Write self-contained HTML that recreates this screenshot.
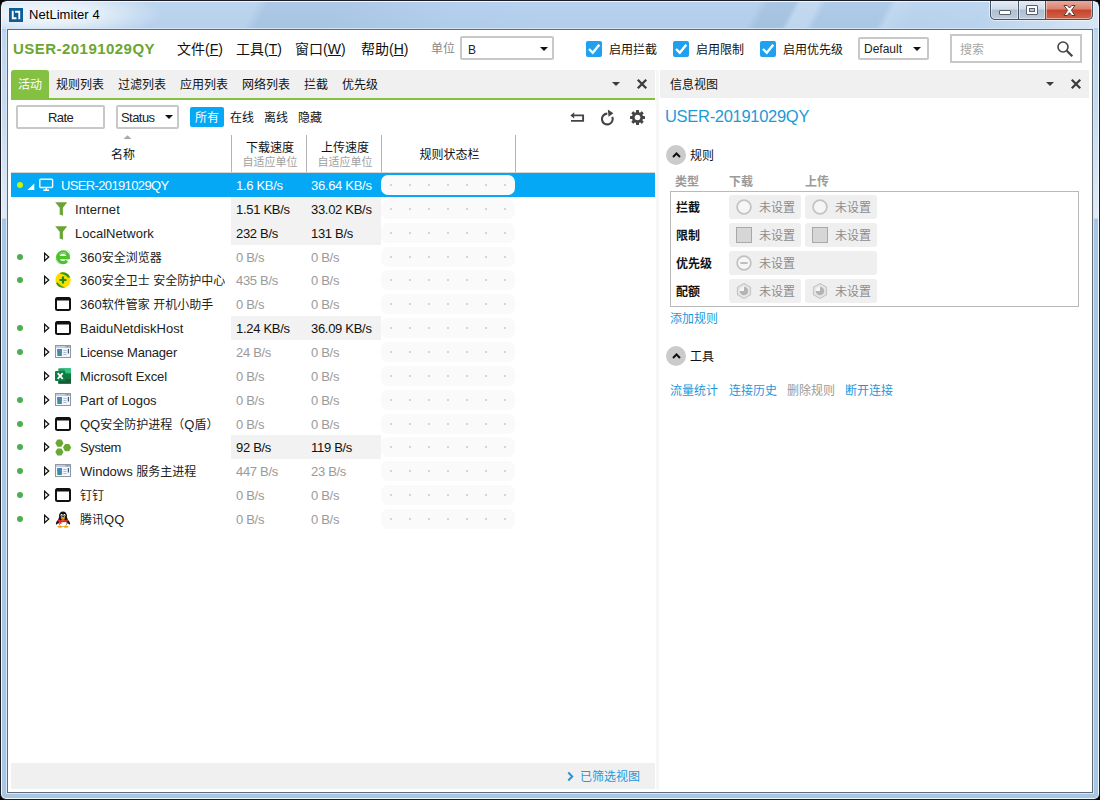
<!DOCTYPE html>
<html lang="zh-CN">
<head>
<meta charset="utf-8">
<title>NetLimiter 4</title>
<style>
*{box-sizing:border-box;margin:0;padding:0}
html,body{width:1100px;height:800px;overflow:hidden;background:#000}
body{font-family:"Liberation Sans","Noto Sans CJK SC",sans-serif;font-size:12px;color:#222;position:relative}
.abs{position:absolute}
#win{position:absolute;left:0;top:0;width:1100px;height:800px;border-radius:7px 7px 6px 6px;background:#1a1c26;overflow:hidden}
#frame{position:absolute;left:1px;top:1px;right:1px;bottom:1px;border-radius:6px 6px 5px 5px;background:#eef8ff}
#glass{position:absolute;left:1px;top:1px;right:1px;bottom:1px;border-radius:5px 5px 4px 4px;background:linear-gradient(180deg,#b5d1ed 0,#afcce9 26px,#bdd5ee 30px,#c6dbf1 110px,#e2ebf5 216px,#a8c5e3 217px,#a8c5e3 100%)}
#streak{position:absolute;left:2px;top:2px;width:1096px;height:26px;overflow:hidden}
#streak i{position:absolute;left:-20px;top:0;width:1140px;height:26px;transform:skewX(-28deg);background:linear-gradient(90deg,rgba(255,255,255,.1) 0,rgba(255,255,255,.1) 268px,rgba(20,50,90,.05) 280px,rgba(20,50,90,.05) 350px,rgba(20,50,90,0) 470px,rgba(255,255,255,.03) 560px,rgba(255,255,255,.03) 770px,rgba(20,50,90,.07) 780px,rgba(20,50,90,.07) 806px,rgba(255,255,255,.18) 812px,rgba(255,255,255,.18) 830px,rgba(20,50,90,.04) 838px,rgba(20,50,90,.04) 900px,rgba(255,255,255,.18) 908px,rgba(255,255,255,.1) 930px,rgba(255,255,255,.12) 1000px,rgba(255,255,255,.3) 1060px,rgba(255,255,255,.5) 1120px,rgba(255,255,255,.55) 100%)}
#titleglow{position:absolute;left:2px;top:2px;width:190px;height:27px;background:radial-gradient(ellipse 115px 26px at 45px 12px,rgba(255,255,255,.8) 0,rgba(255,255,255,.66) 40%,rgba(255,255,255,.3) 72%,rgba(255,255,255,0) 100%)}
#clientb{position:absolute;left:6px;top:28px;width:1088px;height:766px;background:#d6e6f7}
#clientd{position:absolute;left:7px;top:29px;width:1086px;height:764px;background:#5f6b78}
#client{position:absolute;left:8px;top:30px;width:1084px;height:762px;background:#fff;overflow:hidden}
#title{position:absolute;left:29px;top:7px;font-size:13px;letter-spacing:.05px;color:#000;white-space:nowrap;line-height:16px}
.t{position:absolute;white-space:nowrap;line-height:16px}
.gray{color:#888}

#pg{position:absolute;left:-8px;top:-30px;width:1100px;height:800px}
/* caption buttons */
#capb{position:absolute;left:5px;top:0;width:103px;height:19px;border:1px solid #46525f;border-top:none;border-radius:0 0 5px 5px;overflow:hidden;background:#46525f;box-shadow:0 0 0 1px rgba(255,255,255,.55)}
#capb .b{position:absolute;top:0;height:18px}
#cmin{left:0;width:27px;background:linear-gradient(180deg,#e4ecf5 0,#cfdbe9 45%,#aebfd3 50%,#bccbdd 100%);border-radius:0 0 0 4px}
#cmax{left:28px;width:26px;background:linear-gradient(180deg,#e4ecf5 0,#cfdbe9 45%,#aebfd3 50%,#bccbdd 100%)}
#ccls{left:55px;width:46px;background:linear-gradient(180deg,#e9a99a 0,#d9826e 45%,#c5432a 50%,#d2654a 100%);border-radius:0 0 4px 0}
.hl{position:absolute;left:0;top:0;right:0;bottom:0;border:1px solid rgba(255,255,255,.45);border-top:none;border-radius:inherit}
/* toolbar */
#host{left:13px;top:39px;font-size:15px;letter-spacing:.46px;font-weight:bold;color:#6aa632;line-height:20px}
.menu{font-size:14px;top:39px;line-height:20px;color:#111}
.menu u{text-decoration:underline;text-underline-offset:1px}
.combo{position:absolute;border:2px solid #c8c8c8;border-radius:2px;background:#fff}
.combo .arr,.btn .arr{border-top-color:#111;border-width:4px 4px 0 4px;border-top-width:4.5px}
.combo .v{position:absolute;left:6px;top:0;bottom:0;display:flex;align-items:center;font-size:12px;color:#222}
.arr{position:absolute;width:0;height:0;border-left:4.5px solid transparent;border-right:4.5px solid transparent;border-top:4.5px solid #3c3c3c}
.cb{position:absolute;width:16px;height:16px;background:#1fa1f0;border-radius:2px}
.cb svg{position:absolute;left:0;top:0}
.lbl{top:42px;font-size:12px;color:#111}
/* tabs */
.strip{position:absolute;background:#f0f0f0}
.tab{top:77px;font-size:12px;color:#111}

/* filter row */
.btn{position:absolute;border-radius:2px;border:2px solid #c8c8c8;background:#fff;font-size:13px;color:#222;display:flex;align-items:center;justify-content:center}
.f{top:110px;font-size:12px;color:#111}
/* table */
.hsep{position:absolute;top:135px;width:1px;height:38px;background:#b4b4b4}
.h1{position:absolute;text-align:center;font-size:12px;color:#111;white-space:nowrap;line-height:16px}
.h2{position:absolute;text-align:center;font-size:11px;color:#a0a0a0;white-space:nowrap;line-height:14px}
.row{position:absolute;left:11px;width:644px;height:24px}
.row.sel{background:#05a8f4}
.row .nm{position:absolute;top:1px;line-height:24px;font-size:13px;color:#222;white-space:nowrap;overflow:hidden}
.row.sel .nm,.row.sel .sp{color:#fff}
.row .sp{position:absolute;top:1px;letter-spacing:-.3px;line-height:24px;font-size:13px;color:#111;white-space:nowrap}
.row .sp.z{color:#9a9a9a}
.row .bg{position:absolute;left:220px;top:0;width:150px;height:24px;background:#f2f2f2}
.row .st{position:absolute;left:370px;top:2px;width:134px;height:20px;border-radius:7px;background:#fafafa}
.row.sel .st{background:#fafafa}
.row .st i{position:absolute;top:9px;width:2px;height:2px;background:#c8c8c8;border-radius:1px}
.dot{position:absolute;left:6px;top:9px;width:6px;height:6px;border-radius:3px;background:#4caf50}
.row.sel .dot{background:#c8f400}
.ex{position:absolute;left:32px;top:7px}
.ic{position:absolute;left:44px;top:4px}

/* right panel */
#rh{left:665px;top:105px;font-size:16.5px;letter-spacing:-.3px;line-height:22px;color:#1b9ad8}
.circ{position:absolute;width:20px;height:20px;border-radius:10px;background:#cbcbcb}
.circ svg{position:absolute;left:5.500px;top:7px}
.sec{font-size:12px;color:#111}
.th{font-size:12px;color:#9a9a9a;font-weight:bold}
.rl{font-size:12px;font-weight:bold;color:#111;left:676px}
.cell{position:absolute;height:24px;border-radius:3px;background:#efefef}
.cell .ns{position:absolute;left:30px;top:5px;font-size:12px;line-height:16px;color:#8c8c8c;white-space:nowrap}
.cell svg,.cell .sq{position:absolute;left:7px;top:4px}
.sq{width:16px;height:16px;background:#d6d6d6;border:1px solid #a8a8a8}
.lnk{font-size:12px;color:#1e98dc}
.c{font-size:12px}
</style>
</head>
<body>
<div id="win">
 <div id="frame"><div id="glass"></div></div>
 <div id="streak"><i></i></div>
 <div id="titleglow"></div>
 <svg class="abs" style="left:9px;top:8px" width="14" height="14" viewBox="0 0 15 15"><rect width="15" height="15" fill="#0c5c95"/><path d="M3 3h2v7h3v2H3zM6.5 3H12v9h-2V5H6.5z" fill="#fff"/></svg>
 <div id="title">NetLimiter 4</div>

 <div class="abs" style="left:985px;top:1px;width:112px;height:24px;overflow:hidden"><div id="capb">
  <div class="b" id="cmin"><div class="hl"></div><div class="abs" style="left:8px;top:9px;width:12px;height:5px;background:#fff;border:1px solid #55606c;border-radius:1px"></div></div>
  <div class="b" id="cmax"><div class="hl"></div><div class="abs" style="left:7px;top:4px;width:12px;height:10px;background:#fff;border:1px solid #55606c;border-radius:1px"></div><div class="abs" style="left:10px;top:7px;width:6px;height:4px;background:#b9c7d8;border:1px solid #55606c"></div></div>
  <div class="b" id="ccls"><div class="hl"></div><svg class="abs" style="left:16px;top:3px" width="15" height="13" viewBox="0 0 15 13"><path d="M2 1.5h3.3L7.5 4l2.2-2.5H13L9.4 6.3 13 11.5H9.7L7.5 8.7 5.3 11.5H2l3.6-5.2z" fill="#fff" stroke="#5a3a38" stroke-width="1" stroke-linejoin="round"/></svg></div>
 </div></div>
 <div id="clientb"></div><div id="clientd"></div>
 <div id="client">
  <div id="pg">
   <!-- toolbar -->
   <div class="t" id="host">USER-20191029QY</div>
   <div class="t menu" style="left:177px">文件(<u>F</u>)</div>
   <div class="t menu" style="left:236px">工具(<u>T</u>)</div>
   <div class="t menu" style="left:295px">窗口(<u>W</u>)</div>
   <div class="t menu" style="left:361px">帮助(<u>H</u>)</div>
   <div class="t gray" style="left:431px;top:41px">单位</div>
   <div class="combo" style="left:460px;top:36px;width:94px;height:24px"><span class="v" style="top:3px">B</span><i class="arr" style="right:4px;top:9px"></i></div>
   <div class="cb" style="left:586px;top:41px"><svg width="16" height="16" viewBox="0 0 16 16"><path d="M3 8l3.800 3.800L13.300 3.800" fill="none" stroke="#fff" stroke-width="2.400"/></svg></div>
   <div class="t lbl" style="left:609px">启用拦截</div>
   <div class="cb" style="left:673px;top:41px"><svg width="16" height="16" viewBox="0 0 16 16"><path d="M3 8l3.800 3.800L13.300 3.800" fill="none" stroke="#fff" stroke-width="2.400"/></svg></div>
   <div class="t lbl" style="left:696px">启用限制</div>
   <div class="cb" style="left:760px;top:41px"><svg width="16" height="16" viewBox="0 0 16 16"><path d="M3 8l3.800 3.800L13.300 3.800" fill="none" stroke="#fff" stroke-width="2.400"/></svg></div>
   <div class="t lbl" style="left:783px">启用优先级</div>
   <div class="combo" style="left:858px;top:37px;width:71px;height:23px"><span class="v" style="left:4px;top:1px">Default</span><i class="arr" style="right:6px;top:8px"></i></div>
   <div class="combo" style="left:950px;top:34px;width:132px;height:29px;border-radius:0"><span class="v" style="left:8px;color:#a6a6a6;top:-1px">搜索</span>
     <svg class="abs" style="right:6px;top:4px" width="18" height="18" viewBox="0 0 18 18"><circle cx="7" cy="7" r="5" fill="none" stroke="#444" stroke-width="1.600"/><path d="M10.800 10.800l5.500 5.500" stroke="#444" stroke-width="2.200"/></svg></div>

   <!-- left tab strip -->
   <div class="strip" style="left:11px;top:70px;width:644px;height:28px"></div>
   <div class="abs" style="left:11px;top:98px;width:644px;height:2px;background:#84c041"></div>
   <div class="abs" style="left:11px;top:70px;width:38px;height:30px;background:#84c041;border-radius:3px 3px 0 0"></div>
   <div class="t tab" style="left:18px;color:#fff">活动</div>
   <div class="t tab" style="left:56px">规则列表</div>
   <div class="t tab" style="left:118px">过滤列表</div>
   <div class="t tab" style="left:180px">应用列表</div>
   <div class="t tab" style="left:242px">网络列表</div>
   <div class="t tab" style="left:304px">拦截</div>
   <div class="t tab" style="left:342px">优先级</div>
   <i class="arr" style="left:612px;top:82px"></i>
   <svg class="abs" style="left:636px;top:78px" width="12" height="12" viewBox="0 0 12 12"><path d="M1.800 1.800l8.400 8.400M10.200 1.800l-8.400 8.400" stroke="#3c3c3c" stroke-width="2.300"/></svg>

   <!-- right header -->
   <div class="strip" style="left:660px;top:70px;width:429px;height:28px"></div>
   <div class="t tab" style="left:670px">信息视图</div>
   <i class="arr" style="left:1046px;top:82px"></i>
   <svg class="abs" style="left:1070px;top:78px" width="12" height="12" viewBox="0 0 12 12"><path d="M1.800 1.800l8.400 8.400M10.200 1.800l-8.400 8.400" stroke="#3c3c3c" stroke-width="2.300"/></svg>

   <!-- filter row -->
   <div class="btn" style="left:16px;top:105px;width:89px;height:24px;padding-top:1px;letter-spacing:-.6px">Rate</div>
   <div class="btn" style="left:116px;top:105px;width:63px;height:24px;padding-top:1px;justify-content:flex-start;padding-left:3px;letter-spacing:-.55px">Status<i class="arr" style="right:4px;top:8px"></i></div>
   <div class="abs" style="left:190px;top:107px;width:34px;height:20px;background:#05a8f4;border-radius:2px"></div>
   <div class="t f" style="left:195px;color:#fff">所有</div>
   <div class="t f" style="left:230px">在线</div>
   <div class="t f" style="left:264px">离线</div>
   <div class="t f" style="left:298px">隐藏</div>
   <svg class="abs" style="left:569px;top:111px" width="16" height="12" viewBox="0 0 16 12"><path d="M4 4.400h10.100v5.500H2" fill="none" stroke="#444" stroke-width="1.900"/><path d="M1.300 4.400L5.200 1.200v6.400z" fill="#444"/></svg>
   <svg class="abs" style="left:599px;top:109px" width="16" height="17" viewBox="0 0 16 17"><path d="M13.300 7.900A5.400 5.400 0 1 1 8.300 4.600" fill="none" stroke="#444" stroke-width="2.100"/><path d="M8.800 0.600l5.600 3.700-4.800 3.400z" fill="#444"/></svg>
   <svg class="abs" style="left:630px;top:110px" width="15" height="15" viewBox="0 0 15 15"><g fill="#444"><circle cx="7.500" cy="7.500" r="5.600"/><g id="gt"><rect x="6" y="0" width="3" height="15" rx=".5"/></g><rect x="6" y="0" width="3" height="15" rx=".5" transform="rotate(45 7.500 7.500)"/><rect x="6" y="0" width="3" height="15" rx=".5" transform="rotate(90 7.500 7.500)"/><rect x="6" y="0" width="3" height="15" rx=".5" transform="rotate(135 7.500 7.500)"/></g><circle cx="7.500" cy="7.500" r="2.800" fill="#fff"/></svg>

   <!-- table header -->
   <svg class="abs" style="left:123px;top:135px" width="9" height="4" viewBox="0 0 9 4"><path d="M.5 4L4.500 .3 8.500 4z" fill="#a8a8a8"/></svg>
   <div class="h1" style="left:13px;width:220px;top:147px">名称</div>
   <div class="hsep" style="left:231px"></div>
   <div class="h1" style="left:232px;width:76px;top:140px">下载速度</div>
   <div class="h2" style="left:232px;width:76px;top:155px">自适应单位</div>
   <div class="hsep" style="left:306px"></div>
   <div class="h1" style="left:307px;width:76px;top:140px">上传速度</div>
   <div class="h2" style="left:307px;width:76px;top:155px">自适应单位</div>
   <div class="hsep" style="left:381px"></div>
   <div class="h1" style="left:383px;width:133px;top:147px">规则状态栏</div>
   <div class="hsep" style="left:515px"></div>
   <div class="abs" style="left:11px;top:172px;width:644px;height:1px;background:#d8d4d0"></div>
   <!-- rows -->
   <div class="row sel" style="top:173px"><div class="dot"></div><svg class="abs" style="left:16px;top:10px" width="8" height="8" viewBox="0 0 8 8"><path d="M7.300 .4V7H.4z" fill="#fff"/></svg><svg class="abs" style="left:28px;top:5px" width="15" height="14" viewBox="0 0 15 14"><rect x=".8" y="1.300" width="12.800" height="8.200" rx="1" fill="none" stroke="#fff" stroke-width="1.400"/><path d="M7.200 9.500v2.300M4.300 12.300h5.800" stroke="#fff" stroke-width="1.400"/></svg><div class="nm" style="left:50px;width:164px;letter-spacing:-0.64px">USER-20191029QY</div><div class="sp" style="left:225px">1.6 KB/s</div><div class="sp" style="left:300px">36.64 KB/s</div><div class="st"><i style="left:9px"></i><i style="left:28px"></i><i style="left:47px"></i><i style="left:66px"></i><i style="left:85px"></i><i style="left:104px"></i><i style="left:123px"></i></div></div>
   <div class="row " style="top:197px"><div class="bg"></div><svg class="abs" style="left:44px;top:5px" width="13" height="14" viewBox="0 0 13 14"><path d="M.2 .3h12L7.900 5.800V13.700L4.700 12.400V5.800z" fill="#69a533"/></svg><div class="nm" style="left:64px;width:150px;letter-spacing:0.1px">Internet</div><div class="sp" style="left:225px">1.51 KB/s</div><div class="sp" style="left:300px">33.02 KB/s</div><div class="st"><i style="left:9px"></i><i style="left:28px"></i><i style="left:47px"></i><i style="left:66px"></i><i style="left:85px"></i><i style="left:104px"></i><i style="left:123px"></i></div></div>
   <div class="row " style="top:221px"><div class="bg"></div><svg class="abs" style="left:44px;top:5px" width="13" height="14" viewBox="0 0 13 14"><path d="M.2 .3h12L7.900 5.800V13.700L4.700 12.400V5.800z" fill="#69a533"/></svg><div class="nm" style="left:64px;width:150px">LocalNetwork</div><div class="sp" style="left:225px">232 B/s</div><div class="sp" style="left:300px">131 B/s</div><div class="st"><i style="left:9px"></i><i style="left:28px"></i><i style="left:47px"></i><i style="left:66px"></i><i style="left:85px"></i><i style="left:104px"></i><i style="left:123px"></i></div></div>
   <div class="row " style="top:245px"><div class="dot"></div><svg class="ex" width="7" height="10" viewBox="0 0 7 10"><path d="M1.600 1.200l4.200 3.800L1.600 8.800z" fill="none" stroke="#111" stroke-width="1.200"/></svg><svg class="ic" width="16" height="16" viewBox="0 0 16 16"><ellipse cx="8" cy="8" rx="8" ry="5.200" transform="rotate(-42 8 8)" fill="none" stroke="#cfe6cf" stroke-width="1"/><path d="M2.800 8.600H13.300A5.300 5.300 0 1 0 11.900 11.900" fill="none" stroke="#4cc22e" stroke-width="3.300"/><path d="M4.300 5.800A4.600 4.600 0 0 1 11 4.600" fill="none" stroke="#86dc66" stroke-width="1.200"/></svg><div class="nm" style="left:69px;width:145px">360<span class="c">安全浏览器</span></div><div class="sp z" style="left:225px">0 B/s</div><div class="sp z" style="left:300px">0 B/s</div><div class="st"><i style="left:9px"></i><i style="left:28px"></i><i style="left:47px"></i><i style="left:66px"></i><i style="left:85px"></i><i style="left:104px"></i><i style="left:123px"></i></div></div>
   <div class="row " style="top:268px"><div class="dot"></div><svg class="ex" width="7" height="10" viewBox="0 0 7 10"><path d="M1.600 1.200l4.200 3.800L1.600 8.800z" fill="none" stroke="#111" stroke-width="1.200"/></svg><svg class="ic" width="16" height="16" viewBox="0 0 16 16"><circle cx="8" cy="8" r="7.700" fill="#ffdc00"/><path d="M4.300 1.300A7.700 7.700 0 0 1 15.200 5.300L13 5.800C11 3 8 2.300 4.300 1.300z" fill="#2e9e22"/><path d="M1 11.200A7.700 7.700 0 0 0 10.500 15.300C7 14.800 4.500 13 2.500 10.300z" fill="#2e9e22"/><path d="M8 4.500v7M4.500 8h7" stroke="#1f8a1f" stroke-width="2.200"/></svg><div class="nm" style="left:69px;width:145px">360<span class="c">安全卫士</span> <span class="c">安全防护中心模块</span></div><div class="sp z" style="left:225px">435 B/s</div><div class="sp z" style="left:300px">0 B/s</div><div class="st"><i style="left:9px"></i><i style="left:28px"></i><i style="left:47px"></i><i style="left:66px"></i><i style="left:85px"></i><i style="left:104px"></i><i style="left:123px"></i></div></div>
   <div class="row " style="top:292px"><svg class="ic" width="16" height="16" viewBox="0 0 16 16"><rect x="1" y="2" width="14" height="12" rx="1.5" fill="#fff" stroke="#111" stroke-width="2"/><rect x="1" y="1.5" width="14" height="3" rx="1" fill="#111"/></svg><div class="nm" style="left:69px;width:145px">360<span class="c">软件管家</span> <span class="c">开机小助手</span></div><div class="sp z" style="left:225px">0 B/s</div><div class="sp z" style="left:300px">0 B/s</div><div class="st"><i style="left:9px"></i><i style="left:28px"></i><i style="left:47px"></i><i style="left:66px"></i><i style="left:85px"></i><i style="left:104px"></i><i style="left:123px"></i></div></div>
   <div class="row " style="top:316px"><div class="bg"></div><div class="dot"></div><svg class="ex" width="7" height="10" viewBox="0 0 7 10"><path d="M1.600 1.200l4.200 3.800L1.600 8.800z" fill="none" stroke="#111" stroke-width="1.200"/></svg><svg class="ic" width="16" height="16" viewBox="0 0 16 16"><rect x="1" y="2" width="14" height="12" rx="1.5" fill="#fff" stroke="#111" stroke-width="2"/><rect x="1" y="1.5" width="14" height="3" rx="1" fill="#111"/></svg><div class="nm" style="left:69px;width:145px">BaiduNetdiskHost</div><div class="sp" style="left:225px">1.24 KB/s</div><div class="sp" style="left:300px">36.09 KB/s</div><div class="st"><i style="left:9px"></i><i style="left:28px"></i><i style="left:47px"></i><i style="left:66px"></i><i style="left:85px"></i><i style="left:104px"></i><i style="left:123px"></i></div></div>
   <div class="row " style="top:340px"><div class="dot"></div><svg class="ex" width="7" height="10" viewBox="0 0 7 10"><path d="M1.600 1.200l4.200 3.800L1.600 8.800z" fill="none" stroke="#111" stroke-width="1.200"/></svg><svg class="ic" width="16" height="16" viewBox="0 0 16 16"><rect x=".5" y="1.500" width="15" height="12" fill="#f4f6f9" stroke="#8e97a4"/><rect x="1" y="2" width="14" height="2" fill="#c3ccd8"/><rect x="10.500" y="2.300" width="1" height="1" fill="#6b7482"/><rect x="12" y="2.300" width="1" height="1" fill="#6b7482"/><rect x="13.500" y="2.300" width="1" height="1" fill="#6b7482"/><rect x="2.300" y="5" width="4.600" height="7" fill="#3f8f8a"/><rect x="2.300" y="5" width="4.600" height="3.500" fill="#4a84c4"/><rect x="8.300" y="6" width="3.200" height="1" fill="#b4bcc6"/><rect x="8.300" y="8" width="3.200" height="1" fill="#b4bcc6"/><rect x="8.300" y="10" width="3.200" height="1" fill="#b4bcc6"/><rect x="12.800" y="5" width="1.200" height="4.500" fill="#2f5f8f"/></svg><div class="nm" style="left:69px;width:145px;letter-spacing:-0.18px">License Manager</div><div class="sp z" style="left:225px">24 B/s</div><div class="sp z" style="left:300px">0 B/s</div><div class="st"><i style="left:9px"></i><i style="left:28px"></i><i style="left:47px"></i><i style="left:66px"></i><i style="left:85px"></i><i style="left:104px"></i><i style="left:123px"></i></div></div>
   <div class="row " style="top:364px"><svg class="ex" width="7" height="10" viewBox="0 0 7 10"><path d="M1.600 1.200l4.200 3.800L1.600 8.800z" fill="none" stroke="#111" stroke-width="1.200"/></svg><svg class="ic" width="16" height="16" viewBox="0 0 16 16"><rect x="3.300" y="0.300" width="12.700" height="15.400" rx="1" fill="#21a366"/><rect x="9.600" y="0.300" width="6.400" height="5.200" fill="#33c481"/><rect x="9.600" y="5.500" width="6.400" height="5.100" fill="#107c41"/><rect x="3.300" y="10.600" width="12.700" height="5.100" fill="#185c37"/><rect x="0" y="3" width="10.400" height="10" rx="1" fill="#107c41"/><path d="M2.700 5.200l5 5.600M7.700 5.200l-5 5.600" stroke="#fff" stroke-width="1.800"/></svg><div class="nm" style="left:69px;width:145px;letter-spacing:-0.07px">Microsoft Excel</div><div class="sp z" style="left:225px">0 B/s</div><div class="sp z" style="left:300px">0 B/s</div><div class="st"><i style="left:9px"></i><i style="left:28px"></i><i style="left:47px"></i><i style="left:66px"></i><i style="left:85px"></i><i style="left:104px"></i><i style="left:123px"></i></div></div>
   <div class="row " style="top:388px"><div class="dot"></div><svg class="ex" width="7" height="10" viewBox="0 0 7 10"><path d="M1.600 1.200l4.200 3.800L1.600 8.800z" fill="none" stroke="#111" stroke-width="1.200"/></svg><svg class="ic" width="16" height="16" viewBox="0 0 16 16"><rect x=".5" y="1.500" width="15" height="12" fill="#f4f6f9" stroke="#8e97a4"/><rect x="1" y="2" width="14" height="2" fill="#c3ccd8"/><rect x="10.500" y="2.300" width="1" height="1" fill="#6b7482"/><rect x="12" y="2.300" width="1" height="1" fill="#6b7482"/><rect x="13.500" y="2.300" width="1" height="1" fill="#6b7482"/><rect x="2.300" y="5" width="4.600" height="7" fill="#3f8f8a"/><rect x="2.300" y="5" width="4.600" height="3.500" fill="#4a84c4"/><rect x="8.300" y="6" width="3.200" height="1" fill="#b4bcc6"/><rect x="8.300" y="8" width="3.200" height="1" fill="#b4bcc6"/><rect x="8.300" y="10" width="3.200" height="1" fill="#b4bcc6"/><rect x="12.800" y="5" width="1.200" height="4.500" fill="#2f5f8f"/></svg><div class="nm" style="left:69px;width:145px;letter-spacing:-0.06px">Part of Logos</div><div class="sp z" style="left:225px">0 B/s</div><div class="sp z" style="left:300px">0 B/s</div><div class="st"><i style="left:9px"></i><i style="left:28px"></i><i style="left:47px"></i><i style="left:66px"></i><i style="left:85px"></i><i style="left:104px"></i><i style="left:123px"></i></div></div>
   <div class="row " style="top:412px"><div class="dot"></div><svg class="ex" width="7" height="10" viewBox="0 0 7 10"><path d="M1.600 1.200l4.200 3.800L1.600 8.800z" fill="none" stroke="#111" stroke-width="1.200"/></svg><svg class="ic" width="16" height="16" viewBox="0 0 16 16"><rect x="1" y="2" width="14" height="12" rx="1.5" fill="#fff" stroke="#111" stroke-width="2"/><rect x="1" y="1.5" width="14" height="3" rx="1" fill="#111"/></svg><div class="nm" style="left:69px;width:145px">QQ<span class="c">安全防护进程（</span>Q<span class="c">盾）</span></div><div class="sp z" style="left:225px">0 B/s</div><div class="sp z" style="left:300px">0 B/s</div><div class="st"><i style="left:9px"></i><i style="left:28px"></i><i style="left:47px"></i><i style="left:66px"></i><i style="left:85px"></i><i style="left:104px"></i><i style="left:123px"></i></div></div>
   <div class="row " style="top:435px"><div class="bg"></div><div class="dot"></div><svg class="ex" width="7" height="10" viewBox="0 0 7 10"><path d="M1.600 1.200l4.200 3.800L1.600 8.800z" fill="none" stroke="#111" stroke-width="1.200"/></svg><svg class="ic" width="17" height="17" viewBox="0 0 17 17"><path d="M8.50 4.10L6.45 7.65L2.35 7.65L0.30 4.10L2.35 0.55L6.45 0.55zM16.20 8.60L14.15 12.15L10.05 12.15L8.00 8.60L10.05 5.05L14.15 5.05zM8.50 13.00L6.45 16.55L2.35 16.55L0.30 13.00L2.35 9.45L6.45 9.45z" fill="#6aa833"/></svg><div class="nm" style="left:69px;width:145px;letter-spacing:-0.38px">System</div><div class="sp" style="left:225px">92 B/s</div><div class="sp" style="left:300px">119 B/s</div><div class="st"><i style="left:9px"></i><i style="left:28px"></i><i style="left:47px"></i><i style="left:66px"></i><i style="left:85px"></i><i style="left:104px"></i><i style="left:123px"></i></div></div>
   <div class="row " style="top:459px"><div class="dot"></div><svg class="ex" width="7" height="10" viewBox="0 0 7 10"><path d="M1.600 1.200l4.200 3.800L1.600 8.800z" fill="none" stroke="#111" stroke-width="1.200"/></svg><svg class="ic" width="16" height="16" viewBox="0 0 16 16"><rect x=".5" y="1.500" width="15" height="12" fill="#f4f6f9" stroke="#8e97a4"/><rect x="1" y="2" width="14" height="2" fill="#c3ccd8"/><rect x="10.500" y="2.300" width="1" height="1" fill="#6b7482"/><rect x="12" y="2.300" width="1" height="1" fill="#6b7482"/><rect x="13.500" y="2.300" width="1" height="1" fill="#6b7482"/><rect x="2.300" y="5" width="4.600" height="7" fill="#3f8f8a"/><rect x="2.300" y="5" width="4.600" height="3.500" fill="#4a84c4"/><rect x="8.300" y="6" width="3.200" height="1" fill="#b4bcc6"/><rect x="8.300" y="8" width="3.200" height="1" fill="#b4bcc6"/><rect x="8.300" y="10" width="3.200" height="1" fill="#b4bcc6"/><rect x="12.800" y="5" width="1.200" height="4.500" fill="#2f5f8f"/></svg><div class="nm" style="left:69px;width:145px">Windows <span class="c">服务主进程</span></div><div class="sp z" style="left:225px">447 B/s</div><div class="sp z" style="left:300px">23 B/s</div><div class="st"><i style="left:9px"></i><i style="left:28px"></i><i style="left:47px"></i><i style="left:66px"></i><i style="left:85px"></i><i style="left:104px"></i><i style="left:123px"></i></div></div>
   <div class="row " style="top:483px"><div class="dot"></div><svg class="ex" width="7" height="10" viewBox="0 0 7 10"><path d="M1.600 1.200l4.200 3.800L1.600 8.800z" fill="none" stroke="#111" stroke-width="1.200"/></svg><svg class="ic" width="16" height="16" viewBox="0 0 16 16"><rect x="1" y="2" width="14" height="12" rx="1.5" fill="#fff" stroke="#111" stroke-width="2"/><rect x="1" y="1.5" width="14" height="3" rx="1" fill="#111"/></svg><div class="nm" style="left:69px;width:145px"><span class="c">钉钉</span></div><div class="sp z" style="left:225px">0 B/s</div><div class="sp z" style="left:300px">0 B/s</div><div class="st"><i style="left:9px"></i><i style="left:28px"></i><i style="left:47px"></i><i style="left:66px"></i><i style="left:85px"></i><i style="left:104px"></i><i style="left:123px"></i></div></div>
   <div class="row " style="top:507px"><div class="dot"></div><svg class="ex" width="7" height="10" viewBox="0 0 7 10"><path d="M1.600 1.200l4.200 3.800L1.600 8.800z" fill="none" stroke="#111" stroke-width="1.200"/></svg><svg class="ic" width="16" height="17" viewBox="0 0 16 17"><ellipse cx="8" cy="10" rx="5" ry="5.500" fill="#111"/><path d="M3.500 8.500C1.500 10 .6 12 1 13.500c1 .3 2-1 2.800-2.500zM12.500 8.500c2 1.500 2.900 3.500 2.500 5-1 .3-2-1-2.800-2.500z" fill="#111"/><ellipse cx="8" cy="5" rx="4" ry="4.600" fill="#111"/><ellipse cx="8" cy="12" rx="3.700" ry="3.600" fill="#fff"/><ellipse cx="6.600" cy="4.300" rx="1" ry="1.400" fill="#fff"/><ellipse cx="9.400" cy="4.300" rx="1" ry="1.400" fill="#fff"/><circle cx="6.900" cy="4.500" r=".5" fill="#111"/><circle cx="9.100" cy="4.500" r=".5" fill="#111"/><ellipse cx="8" cy="6.900" rx="2.400" ry="1" fill="#f7a600"/><path d="M3.300 8.300c2.800 1.300 6.600 1.300 9.400 0l.4 2c-3.200 1.400-7 1.400-10.200 0z" fill="#e52222"/><path d="M4.600 9.800l1.800.5v2.700l-1.800-.5z" fill="#e52222"/><ellipse cx="5" cy="15.700" rx="2.600" ry="1" fill="#f7a600"/><ellipse cx="11" cy="15.700" rx="2.600" ry="1" fill="#f7a600"/></svg><div class="nm" style="left:69px;width:145px"><span class="c">腾讯</span>QQ</div><div class="sp z" style="left:225px">0 B/s</div><div class="sp z" style="left:300px">0 B/s</div><div class="st"><i style="left:9px"></i><i style="left:28px"></i><i style="left:47px"></i><i style="left:66px"></i><i style="left:85px"></i><i style="left:104px"></i><i style="left:123px"></i></div></div>

   <!-- right panel -->
   <div class="t" id="rh">USER-20191029QY</div>
   <div class="circ" style="left:666px;top:145px"><svg width="9" height="6" viewBox="0 0 9 6"><path d="M1 5l3.500-3.500L8 5" fill="none" stroke="#111" stroke-width="2"/></svg></div>
   <div class="t sec" style="left:690px;top:148px">规则</div>
   <div class="t th" style="left:675px;top:174px">类型</div>
   <div class="t th" style="left:729px;top:174px">下载</div>
   <div class="t th" style="left:805px;top:174px">上传</div>
   <div class="abs" style="left:670px;top:191px;width:409px;height:116px;border:1px solid #b9b9b9;background:#fff"></div>
   <div class="t rl" style="top:200px">拦截</div>
   <div class="t rl" style="top:228px">限制</div>
   <div class="t rl" style="top:256px">优先级</div>
   <div class="t rl" style="top:284px">配额</div>
   <div class="cell" style="left:729px;top:195px;width:72px"><svg width="16" height="16" viewBox="0 0 16 16"><circle cx="8" cy="8" r="6.900" fill="#f6f6f6" stroke="#c4c4c4" stroke-width="1.800"/></svg><span class="ns">未设置</span></div>
   <div class="cell" style="left:805px;top:195px;width:72px"><svg width="16" height="16" viewBox="0 0 16 16"><circle cx="8" cy="8" r="6.900" fill="#f6f6f6" stroke="#c4c4c4" stroke-width="1.800"/></svg><span class="ns">未设置</span></div>
   <div class="cell" style="left:729px;top:223px;width:72px"><div class="sq"></div><span class="ns">未设置</span></div>
   <div class="cell" style="left:805px;top:223px;width:72px"><div class="sq"></div><span class="ns">未设置</span></div>
   <div class="cell" style="left:729px;top:251px;width:148px"><svg width="16" height="16" viewBox="0 0 16 16"><circle cx="8" cy="8" r="6.900" fill="#f6f6f6" stroke="#c2c2c2" stroke-width="1.700"/><path d="M4.300 8h7.400" stroke="#b4b4b4" stroke-width="1.700"/></svg><span class="ns">未设置</span></div>
   <div class="cell" style="left:729px;top:279px;width:72px"><svg width="16" height="16" viewBox="0 0 16 16"><path d="M8 .6l6.500 3.700v7.400L8 15.400l-6.500-3.700V4.300z" fill="#e6e6e6" stroke="#c6c6c6" stroke-width="1.200"/><circle cx="8" cy="8" r="4.300" fill="#f6f6f6"/><path d="M8 3.700A4.300 4.300 0 1 1 3.700 8H8z" fill="#b4b4b4"/></svg><span class="ns">未设置</span></div>
   <div class="cell" style="left:805px;top:279px;width:72px"><svg width="16" height="16" viewBox="0 0 16 16"><path d="M8 .6l6.500 3.700v7.400L8 15.400l-6.500-3.700V4.300z" fill="#e6e6e6" stroke="#c6c6c6" stroke-width="1.200"/><circle cx="8" cy="8" r="4.300" fill="#f6f6f6"/><path d="M8 3.700A4.300 4.300 0 1 1 3.700 8H8z" fill="#b4b4b4"/></svg><span class="ns">未设置</span></div>
   <div class="t lnk" style="left:670px;top:311px">添加规则</div>
   <div class="circ" style="left:666px;top:346px"><svg width="9" height="6" viewBox="0 0 9 6"><path d="M1 5l3.500-3.500L8 5" fill="none" stroke="#111" stroke-width="2"/></svg></div>
   <div class="t sec" style="left:690px;top:349px">工具</div>
   <div class="t lnk" style="left:670px;top:383px">流量统计</div>
   <div class="t lnk" style="left:729px;top:383px">连接历史</div>
   <div class="t lnk" style="left:787px;top:383px;color:#9a9a9a">删除规则</div>
   <div class="t lnk" style="left:845px;top:383px">断开连接</div>
   <!-- footer -->
   <div class="strip" style="left:11px;top:763px;width:644px;height:26px"></div>
   <svg class="abs" style="left:567px;top:771px" width="7" height="11" viewBox="0 0 7 11"><path d="M1.300 1.500L5.200 5.500 1.300 9.500" fill="none" stroke="#1e98dc" stroke-width="2"/></svg>
   <div class="t" style="left:580px;top:769px;font-size:12px;color:#1e98dc">已筛选视图</div>
   <div class="abs" style="left:656px;top:70px;width:3px;height:720px;background:#f7f7f7"></div>
  </div>
 </div>
</div>
</body>
</html>
